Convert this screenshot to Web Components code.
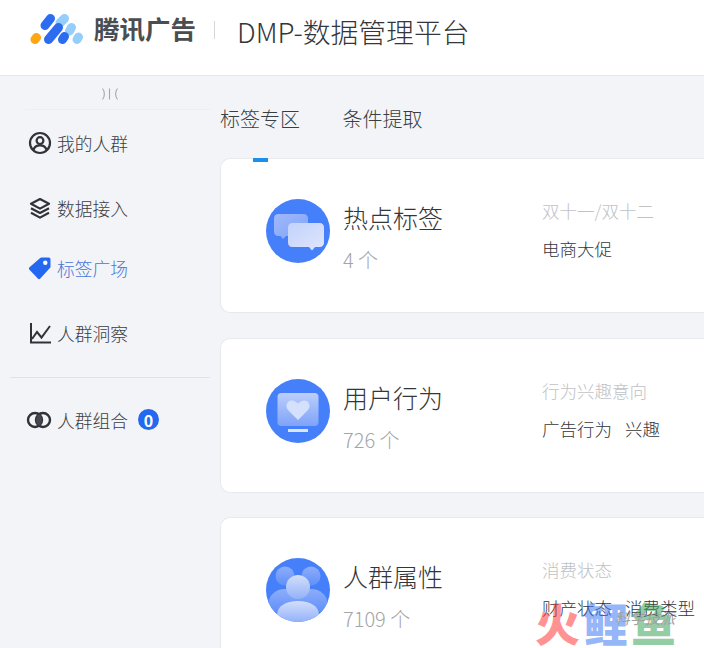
<!DOCTYPE html>
<html lang="zh">
<head>
<meta charset="utf-8">
<title>DMP</title>
<style>
  html, body {
    margin: 0;
    height: 648px;
    overflow: hidden;
    background: #f3f4f7;
    font-family: "Noto Sans CJK SC", "Noto Sans", sans-serif;
    font-weight: 300;
    color: #333;
  }
  .layout {
    display: flex;
    height: 572px;
  }
</style>
</head>
<body>
<app-header></app-header>
<div class="layout">
  <side-nav>
    <nav-item>
      <svg slot="icon" width="24" height="24" viewBox="0 0 24 24" fill="none" stroke="#2f3338" stroke-width="2.2"><circle cx="12" cy="12" r="10"/><circle cx="12" cy="9.6" r="3.4"/><path d="M5.4 19c1-3.4 3.6-4.6 6.6-4.6s5.600 1.200 6.600 4.600"/></svg>
      我的人群
    </nav-item>
    <nav-item style="--gap-top:38px">
      <svg slot="icon" width="24" height="24" viewBox="0 0 24 24" fill="none" stroke="#2f3338" stroke-width="2.200" stroke-linejoin="round"><path d="M12 3l9 4.800-9 4.800-9-4.800z"/><path d="M3 12.200l9 4.800 9-4.800"/><path d="M3 16.800l9 4.800 9-4.800"/></svg>
      数据接入
    </nav-item>
    <nav-item active style="--gap-top:33px">
      <svg slot="icon" width="24" height="24" viewBox="0 0 24 24"><path fill="#2468f2" d="M13.500 1.500h7.200c1 0 1.800.8 1.800 1.800v7.400c0 .5-.2 1-.6 1.300L12.300 22.600c-.7.7-1.800.7-2.500 0L1.500 13.800c-.7-.7-.7-1.800 0-2.500L12.200 2c.4-.3.800-.5 1.300-.5z"/><circle cx="17.300" cy="6.700" r="2.200" fill="#fff"/></svg>
      标签广场
    </nav-item>
    <nav-item style="--gap-top:38px">
      <svg slot="icon" width="24" height="24" viewBox="0 0 24 24" fill="none" stroke="#2f3338" stroke-width="2"><path d="M3 2v19.500h20"/><path d="M4 18l5-7 4.500 5.500L22 5"/></svg>
      人群洞察
    </nav-item>
    <nav-divider></nav-divider>
    <nav-item style="--gap-top:0px">
      <svg slot="icon" width="26" height="24" viewBox="0 0 26 24" style="margin-left:-2px"><circle cx="9" cy="12" r="7" fill="none" stroke="#2f3338" stroke-width="2.400"/><circle cx="17" cy="12" r="7" fill="none" stroke="#2f3338" stroke-width="2.400"/><path fill="#44474d" d="M13 6.260A7 7 0 0 1 13 17.740 7 7 0 0 1 13 6.260z"/></svg>
      人群组合
      <span slot="badge">0</span>
    </nav-item>
  </side-nav>
  <main-panel>
    <tab-bar></tab-bar>
    <tag-card title-text="热点标签" count="4 个" sub="双十一/双十二" tags="电商大促">
      <svg slot="art" width="64" height="64" viewBox="0 0 64 64">
        <defs>
          <linearGradient id="bubbleBack" x1="0" y1="0" x2="1" y2="1"><stop offset="0" stop-color="#9fb9fb"/><stop offset="1" stop-color="#7fa2f8"/></linearGradient>
          <linearGradient id="bubbleFront" x1="0" y1="0" x2="1" y2="1"><stop offset="0" stop-color="#c2d2fb"/><stop offset="1" stop-color="#dfe6fb"/></linearGradient>
        </defs>
        <circle cx="32" cy="32" r="32" fill="#4580fa"/>
        <path fill="url(#bubbleBack)" d="M12 15h26c2.200 0 4 1.800 4 4v14c0 2.200-1.800 4-4 4H20l-3 3-2.500-3H12c-2.200 0-4-1.800-4-4V19c0-2.200 1.800-4 4-4z"/>
        <path fill="url(#bubbleFront)" d="M26 24h28c2.200 0 4 1.800 4 4v16c0 2.200-1.800 4-4 4h-5l-3 3.500-3-3.500H26c-2.200 0-4-1.800-4-4V28c0-2.200 1.800-4 4-4z"/>
      </svg>
    </tag-card>
    <tag-card title-text="用户行为" count="726 个" sub="行为兴趣意向" tags="广告行为,兴趣">
      <svg slot="art" width="64" height="64" viewBox="0 0 64 64">
        <defs>
          <linearGradient id="screen" x1="0" y1="0" x2="0" y2="1"><stop offset="0" stop-color="#bccefb"/><stop offset="1" stop-color="#7ea3f9"/></linearGradient>
        </defs>
        <circle cx="32" cy="32" r="32" fill="#4580fa"/>
        <rect x="11.500" y="14" width="41" height="33" rx="4" fill="url(#screen)"/>
        <path fill="#d5e0fc" d="M32 41l-9.500-9.500c-2.700-2.800-2.700-6.500-.2-8.700 2.500-2 6-1.600 9.700 1.700 3.700-3.300 7.200-3.700 9.700-1.700 2.500 2.200 2.500 5.900-.2 8.700z"/>
        <rect x="22" y="50" width="20" height="3" fill="#dbe5fd"/>
      </svg>
    </tag-card>
    <tag-card title-text="人群属性" count="7109 个" sub="消费状态" tags="财产状态,消费类型">
      <svg slot="art" width="64" height="64" viewBox="0 0 64 64">
        <defs>
          <clipPath id="disc"><circle cx="32" cy="32" r="32"/></clipPath>
          <linearGradient id="person" x1="0" y1="0" x2="0" y2="1"><stop offset="0" stop-color="#d3def9"/><stop offset="1" stop-color="#94b2fa"/></linearGradient>
          <linearGradient id="personBack" x1="0" y1="0" x2="0" y2="1"><stop offset="0" stop-color="#8eadf9"/><stop offset="1" stop-color="#5f90fb"/></linearGradient>
        </defs>
        <circle cx="32" cy="32" r="32" fill="#4580fa"/>
        <g clip-path="url(#disc)">
          <circle cx="19" cy="18" r="9.500" fill="url(#personBack)"/>
          <circle cx="45" cy="18" r="9.500" fill="url(#personBack)"/>
          <path fill="url(#personBack)" d="M2 48c0-11 8-17 17-17s17 6 17 17v6H2z"/>
          <path fill="url(#personBack)" d="M28 48c0-11 8-17 17-17s17 6 17 17v6H28z"/>
          <circle cx="32" cy="29" r="12" fill="url(#person)"/>
          <path fill="url(#person)" d="M11 64V57c0-9 9-14 21-14s21 5 21 14v7z"/>
        </g>
      </svg>
    </tag-card>
  </main-panel>
</div>
<water-mark></water-mark>

<script>
class AppHeader extends HTMLElement {
  constructor() {
    super();
    this.attachShadow({ mode: "open" }).innerHTML = `
      <style>
        :host {
          display: flex;
          align-items: center;
          height: 76px;
          box-sizing: border-box;
          padding: 0 0 15px 29px;
          background: #fff;
          border-bottom: 1px solid #e6e7ea;
        }
        .brand { font-size: 25.5px; font-weight: 700; color: #4a4d51; margin: 0 0 6px 9px; white-space: nowrap; }
        .sep { width: 1px; height: 18px; background: #d5d7da; margin: 0 22px 0 18px; }
        .name { font-size: 27.8px; color: #33363a; white-space: nowrap; margin-top: 2px; }
      </style>
      <svg width="56" height="36" viewBox="0 0 56 36" stroke-linecap="round" fill="none" stroke-width="9">
        <path stroke="#ffa713" d="M6 27.500l1.500-2"/>
        <path stroke="#95cdfb" d="M31 11l4.500-4.500"/>
        <path stroke="#95cdfb" d="M40.500 19l2-3.500"/>
        <path stroke="#95cdfb" d="M48 27.500l1.500-2.500"/>
        <path stroke="#2b6cf0" d="M16 13.500l5.500-7"/>
        <path stroke="#2b6cf0" d="M19.500 27.500l10-12"/>
        <path stroke="#2b6cf0" d="M33.500 27.500l2-3"/>
      </svg>
      <span class="brand">腾讯广告</span>
      <span class="sep"></span>
      <span class="name">DMP-数据管理平台</span>
    `;
  }
}

class SideNav extends HTMLElement {
  constructor() {
    super();
    this.attachShadow({ mode: "open" }).innerHTML = `
      <style>
        :host {
          display: block;
          flex: none;
          width: 220px;
          box-sizing: border-box;
        }
        .collapse {
          display: flex;
          justify-content: center;
          align-items: center;
          height: 34px;
          margin: 0 10px 0 25px;
          padding: 2px 15px 0 0;
          border-bottom: 1px solid #eceef0;
          box-sizing: border-box;
        }
        .items { display: flex; flex-direction: column; padding-top: 19px; }
      </style>
      <div class="collapse">
        <svg width="18" height="12" viewBox="0 0 18 12" fill="none" stroke="#a4a7ac" stroke-width="1.100"><path d="M1.500 .5c2.500 3 2.500 8 0 11"/><path d="M8.500 .5v11"/><path d="M16.500 .5c-2.500 3-2.500 8 0 11"/></svg>
      </div>
      <div class="items"><slot></slot></div>
    `;
  }
}

class NavItem extends HTMLElement {
  constructor() {
    super();
    this.attachShadow({ mode: "open" }).innerHTML = `
      <style>
        :host {
          display: flex;
          align-items: center;
          gap: 5px;
          height: 27px;
          margin-top: var(--gap-top, 0);
          padding-left: 28px;
          font-size: 17.75px;
          color: #3a3d42;
          white-space: nowrap;
        }
        :host([active]) { color: #4a74d8; }
        ::slotted([slot="badge"]) {
          display: flex;
          align-items: center;
          justify-content: center;
          width: 21px;
          height: 21px;
          margin-left: 5px;
          border-radius: 50%;
          background: #2468f2;
          color: #fff;
          font-size: 16px;
          font-weight: 700;
        }
        .icon { display: flex; width: 24px; justify-content: center; }
      </style>
      <span class="icon"><slot name="icon"></slot></span>
      <slot></slot>
      <slot name="badge"></slot>
    `;
  }
}

class NavDivider extends HTMLElement {
  constructor() {
    super();
    this.attachShadow({ mode: "open" }).innerHTML = `
      <style>
        :host {
          display: block;
          height: 1px;
          margin: 31px 10px 28px 10px;
          background: #e0e2e6;
        }
      </style>
    `;
  }
}

class MainPanel extends HTMLElement {
  constructor() {
    super();
    this.attachShadow({ mode: "open" }).innerHTML = `
      <style>
        :host {
          display: flex;
          flex-direction: column;
          flex: none;
          width: 520px;
          gap: 24.5px;
        }
      </style>
      <slot></slot>
    `;
  }
}

class TabBar extends HTMLElement {
  constructor() {
    super();
    this.attachShadow({ mode: "open" }).innerHTML = `
      <style>
        :host {
          display: flex;
          flex: none;
          gap: 42.5px;
          height: 82px;
          box-sizing: border-box;
          padding-top: 28px;
          margin-bottom: -24.5px;
          font-size: 20px;
          line-height: 30px;
          color: #3a3d42;
        }
        .tab { position: relative; white-space: nowrap; }
        .on::after {
          content: "";
          position: absolute;
          left: 33px;
          bottom: -4px;
          width: 15px;
          height: 4px;
          background: #1c8fea;
        }
      </style>
      <span class="tab on">标签专区</span>
      <span class="tab">条件提取</span>
    `;
  }
}

const cardTemplate = document.createElement("template");
cardTemplate.innerHTML = `
  <style>
    :host {
      display: flex;
      flex: none;
      height: 155px;
      box-sizing: border-box;
      padding: 40px 0 0 45px;
      background: #fff;
      border: 1px solid #e8e9ec;
      border-right: 0;
      border-radius: 10px 0 0 10px;
    }
    .art { flex: none; width: 64px; height: 64px; margin-right: 13px; }
    .main { flex: none; width: 199px; }
    .title { font-size: 25px; line-height: 37px; color: #33363a; }
    .count { font-size: 20px; line-height: 28px; color: #a3a5a9; margin-top: 10px; }
    .sub { font-size: 17.5px; line-height: 26px; color: #c0c2c5; margin-top: -1px; }
    .tags { display: flex; gap: 13px; font-size: 17.5px; line-height: 26px; color: #33363a; margin-top: 12px; white-space: nowrap; }
  </style>
  <div class="art"><slot name="art"></slot></div>
  <div class="main">
    <div class="title"></div>
    <div class="count"></div>
  </div>
  <div>
    <div class="sub"></div>
    <div class="tags"></div>
  </div>
`;

class TagCard extends HTMLElement {
  constructor() {
    super();
    this.attachShadow({ mode: "open" }).appendChild(cardTemplate.content.cloneNode(true));
  }

  connectedCallback() {
    const root = this.shadowRoot;
    root.querySelector(".title").textContent = this.getAttribute("title-text");
    root.querySelector(".count").textContent = this.getAttribute("count");
    root.querySelector(".sub").textContent = this.getAttribute("sub");
    const tags = root.querySelector(".tags");
    tags.replaceChildren();
    for (const tag of this.getAttribute("tags").split(",")) {
      const span = document.createElement("span");
      span.textContent = tag;
      tags.appendChild(span);
    }
  }
}

class WaterMark extends HTMLElement {
  constructor() {
    super();
    this.attachShadow({ mode: "open" }).innerHTML = `
      <style>
        :host {
          position: absolute;
          left: 535px;
          top: 602px;
          display: flex;
          height: 42px;
          font-size: 45px;
          line-height: 42px;
          font-weight: 900;
          letter-spacing: 3px;
          opacity: .55;
          pointer-events: none;
          white-space: nowrap;
        }
        .fire { color: #ff3b3b; }
        .carp { color: #3f7cf5; }
        .fish { color: #3da35a; }
        .note {
          position: absolute;
          left: 80px;
          top: 6px;
          font-size: 15px;
          line-height: 20px;
          font-weight: 400;
          font-style: italic;
          letter-spacing: 0;
          color: #555;
        }
      </style>
      <span class="fire">火</span><span class="carp">鲤</span><span class="fish">鱼</span>
      <span class="note">科学技派</span>
    `;
  }
}

customElements.define("app-header", AppHeader);
customElements.define("side-nav", SideNav);
customElements.define("nav-item", NavItem);
customElements.define("nav-divider", NavDivider);
customElements.define("main-panel", MainPanel);
customElements.define("tab-bar", TabBar);
customElements.define("tag-card", TagCard);
customElements.define("water-mark", WaterMark);
</script>
</body>
</html>
